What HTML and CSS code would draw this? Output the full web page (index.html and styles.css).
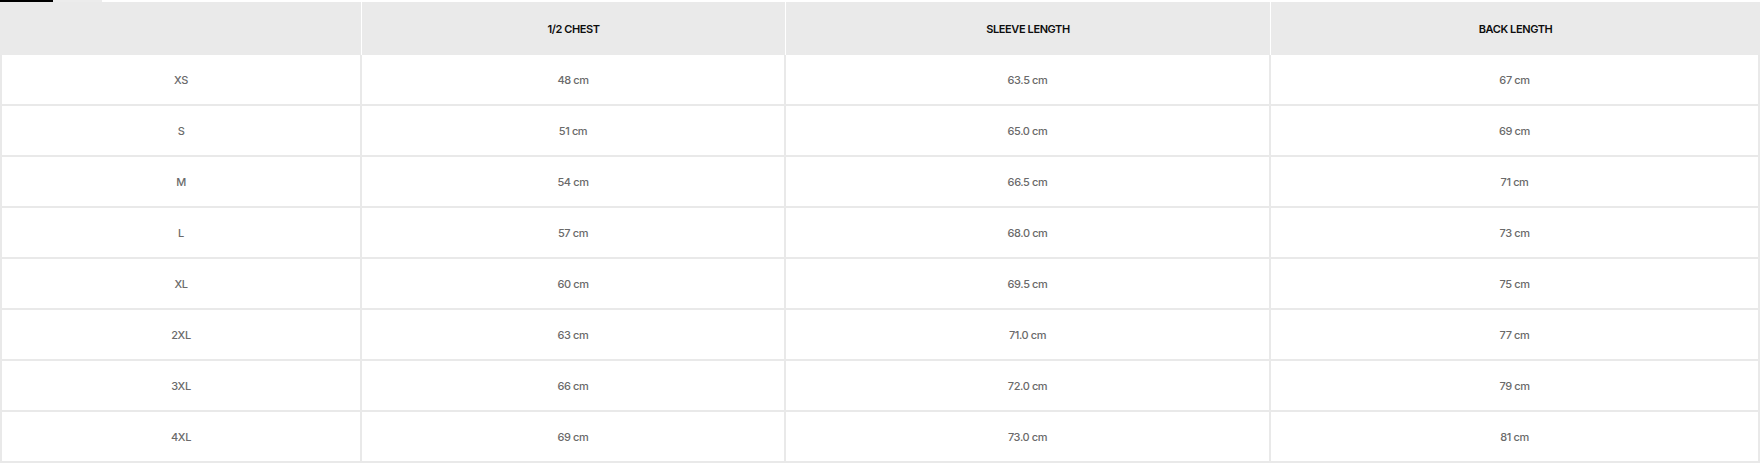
FILE: index.html
```html
<!DOCTYPE html>
<html lang="en">
<head>
<meta charset="utf-8">
<title>Size guide</title>
<link rel="stylesheet" href="styles.css">
</head>
<body>
<div class="tabs">
  <span class="tab tab-active"></span>
  <span class="tab tab-idle"></span>
</div>
<table class="sizes">
  <colgroup>
    <col class="c1"><col class="c2"><col class="c3"><col class="c4">
  </colgroup>
  <thead>
    <tr>
      <th></th>
      <th>1/2 CHEST</th>
      <th>SLEEVE LENGTH</th>
      <th>BACK LENGTH</th>
    </tr>
  </thead>
  <tbody>
    <tr><td>XS</td><td>48 cm</td><td>63.5 cm</td><td>67 cm</td></tr>
    <tr><td>S</td><td>51 cm</td><td>65.0 cm</td><td>69 cm</td></tr>
    <tr><td>M</td><td>54 cm</td><td>66.5 cm</td><td>71 cm</td></tr>
    <tr><td>L</td><td>57 cm</td><td>68.0 cm</td><td>73 cm</td></tr>
    <tr><td>XL</td><td>60 cm</td><td>69.5 cm</td><td>75 cm</td></tr>
    <tr><td>2XL</td><td>63 cm</td><td>71.0 cm</td><td>77 cm</td></tr>
    <tr><td>3XL</td><td>66 cm</td><td>72.0 cm</td><td>79 cm</td></tr>
    <tr><td>4XL</td><td>69 cm</td><td>73.0 cm</td><td>81 cm</td></tr>
  </tbody>
</table>
</body>
</html>
```
FILE: styles.css
```css
html, body {
  margin: 0;
  padding: 0;
  background: #fff;
}
body {
  font-family: Inter, "Liberation Sans", Arial, sans-serif;
  width: 1760px;
}
.tabs {
  display: flex;
  height: 2px;
}
.tab {
  display: block;
  height: 2px;
}
.tab-active {
  width: 53px;
  background: #000;
}
.tab-idle {
  width: 49px;
  background: #ececec;
}
.sizes {
  width: 1760px;
  table-layout: fixed;
  border-collapse: separate;
  border-spacing: 0;
}
.c1 { width: 362px; }
.c2 { width: 424px; }
.c3 { width: 485px; }
.c4 { width: 489px; }
.sizes th {
  height: 53px;
  padding: 0;
  box-sizing: border-box;
  background: #eaeaea;
  border-right: 1px solid #fff;
  color: #0d0d0d;
  font-size: 11px;
  font-weight: 600;
  letter-spacing: -0.4px;
  text-align: center;
  vertical-align: middle;
}
.sizes th:last-child {
  border-right: none;
}
.sizes td {
  height: 51px;
  padding: 0;
  box-sizing: border-box;
  background: #fff;
  border-right: 2px solid #e9e9e9;
  border-bottom: 2px solid #e9e9e9;
  color: #6a6a6a;
  font-size: 11px;
  font-weight: 500;
  letter-spacing: -0.4px;
  text-align: center;
  vertical-align: middle;
}
.sizes td:first-child {
  border-left: 2px solid #e9e9e9;
}
```
